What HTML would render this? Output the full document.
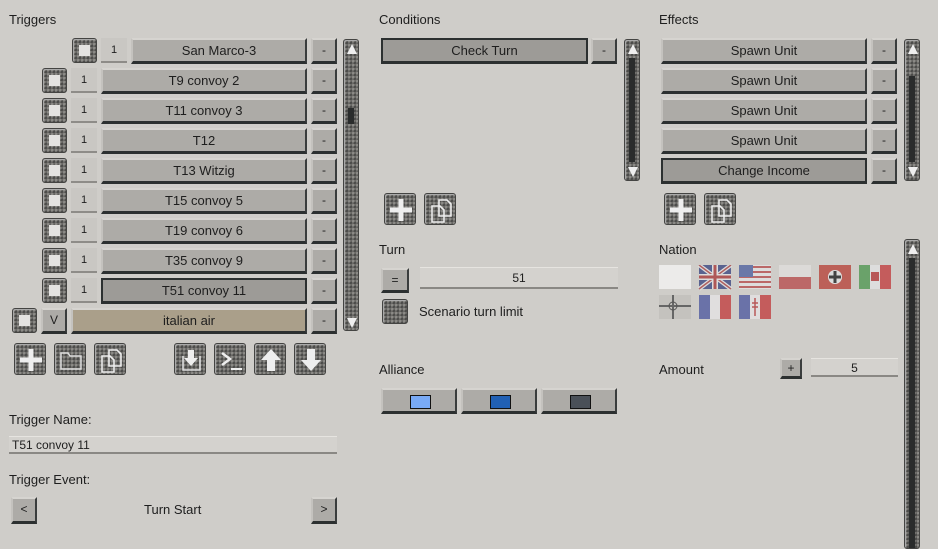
<!DOCTYPE html><html><head><meta charset="utf-8"><style>
body{margin:0;width:938px;height:538px;background:#cfcdc9;font-family:"Liberation Sans",sans-serif;color:#1e1e1e;position:relative;overflow:hidden}
div{position:absolute;box-sizing:border-box}
.l{font-size:13px}
.b{background:#adaba7;border-top:2px solid #d6d4d0;border-left:2px solid #c4c2be;border-right:2px solid #3a3d3d;border-bottom:3px solid #2c3030;font-size:13px;text-align:center;line-height:21px}
.s{background:#9d9b97;border:2px solid #2c3030;border-bottom:3px solid #2c3030}
.n{background:#c9c7c3;border-bottom:2px solid #8e8c88;font-size:11px;text-align:center;line-height:24px}
.m{font-size:12px}
.t{background-color:#6a6966;background-image:radial-gradient(circle at 30% 30%,#8c8b87 1px,transparent 1.6px),radial-gradient(circle at 70% 70%,#4a4a48 1px,transparent 1.6px);background-size:4px 4px;border-radius:3px;border:1px solid #444442;box-shadow:inset 1px 1px 0 #aaa;overflow:hidden}
.c::after{content:"";position:absolute;left:6px;top:6px;width:11px;height:11px;background:#e4e3e1}
.sb{width:16px}
.sb .tr{left:4px;width:6px;background:#2a2c2c}
.f{background:#d4d2ce;border-bottom:2px solid #8a8884;border-top:1px solid #e6e4e0}
svg{position:absolute;left:0;top:0}
</style></head><body>
<div class="l" style="left:9px;top:12px">Triggers</div>
<div class="l" style="left:379px;top:12px">Conditions</div>
<div class="l" style="left:659px;top:12px">Effects</div>

<div class="t c" style="left:72px;top:38px;width:25px;height:25px"></div>
<div class="n" style="left:101px;top:38px;width:26px;height:25px">1</div>
<div class="b" style="left:131px;top:38px;width:176px;height:26px">San Marco-3</div>
<div class="b m" style="left:311px;top:38px;width:26px;height:26px">-</div>

<div class="t c" style="left:42px;top:68px;width:25px;height:25px"></div><div class="n" style="left:71px;top:68px;width:26px;height:25px">1</div><div class="b" style="left:101px;top:68px;width:206px;height:26px">T9 convoy 2</div><div class="b m" style="left:311px;top:68px;width:26px;height:26px">-</div>
<div class="t c" style="left:42px;top:98px;width:25px;height:25px"></div><div class="n" style="left:71px;top:98px;width:26px;height:25px">1</div><div class="b" style="left:101px;top:98px;width:206px;height:26px">T11 convoy 3</div><div class="b m" style="left:311px;top:98px;width:26px;height:26px">-</div>
<div class="t c" style="left:42px;top:128px;width:25px;height:25px"></div><div class="n" style="left:71px;top:128px;width:26px;height:25px">1</div><div class="b" style="left:101px;top:128px;width:206px;height:26px">T12</div><div class="b m" style="left:311px;top:128px;width:26px;height:26px">-</div>
<div class="t c" style="left:42px;top:158px;width:25px;height:25px"></div><div class="n" style="left:71px;top:158px;width:26px;height:25px">1</div><div class="b" style="left:101px;top:158px;width:206px;height:26px">T13 Witzig</div><div class="b m" style="left:311px;top:158px;width:26px;height:26px">-</div>
<div class="t c" style="left:42px;top:188px;width:25px;height:25px"></div><div class="n" style="left:71px;top:188px;width:26px;height:25px">1</div><div class="b" style="left:101px;top:188px;width:206px;height:26px">T15 convoy 5</div><div class="b m" style="left:311px;top:188px;width:26px;height:26px">-</div>
<div class="t c" style="left:42px;top:218px;width:25px;height:25px"></div><div class="n" style="left:71px;top:218px;width:26px;height:25px">1</div><div class="b" style="left:101px;top:218px;width:206px;height:26px">T19 convoy 6</div><div class="b m" style="left:311px;top:218px;width:26px;height:26px">-</div>
<div class="t c" style="left:42px;top:248px;width:25px;height:25px"></div><div class="n" style="left:71px;top:248px;width:26px;height:25px">1</div><div class="b" style="left:101px;top:248px;width:206px;height:26px">T35 convoy 9</div><div class="b m" style="left:311px;top:248px;width:26px;height:26px">-</div>
<div class="t c" style="left:42px;top:278px;width:25px;height:25px"></div><div class="n" style="left:71px;top:278px;width:26px;height:25px">1</div><div class="b s" style="left:101px;top:278px;width:206px;height:26px">T51 convoy 11</div><div class="b m" style="left:311px;top:278px;width:26px;height:26px">-</div>
<div class="t c" style="left:12px;top:308px;width:25px;height:25px"></div>
<div class="b m" style="left:41px;top:308px;width:26px;height:26px">V</div>
<div class="b" style="left:71px;top:308px;width:236px;height:26px;background:#aa9f8a">italian air</div>
<div class="b m" style="left:311px;top:308px;width:26px;height:26px">-</div>

<div class="t sb" style="left:343px;top:39px;height:292px"><div class="tr" style="top:68px;height:16px"></div><svg width="16" height="290"><path d="M3 14L8 4L13 14Z M3 278L8 288L13 278Z" fill="#eee"/></svg></div>
<div class="t sb" style="left:624px;top:39px;height:142px"><div class="tr" style="top:18px;height:104px"></div><svg width="16" height="140"><path d="M3 14L8 4L13 14Z M3 127L8 137L13 127Z" fill="#eee"/></svg></div>
<div class="t sb" style="left:904px;top:39px;height:142px"><div class="tr" style="top:36px;height:86px"></div><svg width="16" height="140"><path d="M3 14L8 4L13 14Z M3 127L8 137L13 127Z" fill="#eee"/></svg></div>
<div class="t sb" style="left:904px;top:239px;height:310px"><div class="tr" style="top:18px;height:290px"></div><svg width="16" height="30"><path d="M3 14L8 4L13 14Z" fill="#eee"/></svg></div>

<div class="t" style="left:14px;top:343px;width:32px;height:32px"><svg width="32" height="32"><path d="M16 5V27M5 16H27" stroke="#eee" stroke-width="5"/></svg></div>
<div class="t" style="left:54px;top:343px;width:32px;height:32px"><svg width="32" height="32"><path d="M6 9H13L15 12H26V25H6Z" fill="none" stroke="#ddd" stroke-width="1.5"/></svg></div>
<div class="t" style="left:94px;top:343px;width:32px;height:32px"><svg width="32" height="32"><path d="M14 6H22L26 10V22H14Z M7 12H15L19 16V28H7Z" fill="none" stroke="#eee" stroke-width="1.6"/></svg></div>
<div class="t" style="left:174px;top:343px;width:32px;height:32px"><svg width="32" height="32"><path d="M8 12V26H25V12" fill="none" stroke="#ddd" stroke-width="1.6"/><path d="M13 6H19V14H23L16 22L9 14H13Z" fill="#eee"/></svg></div>
<div class="t" style="left:214px;top:343px;width:32px;height:32px"><svg width="32" height="32"><path d="M7 9L15 15L7 21" fill="none" stroke="#eee" stroke-width="2.5"/><path d="M16 25H27" stroke="#eee" stroke-width="2"/></svg></div>
<div class="t" style="left:254px;top:343px;width:32px;height:32px"><svg width="32" height="32"><path d="M16 5L26 16H20V27H12V16H6Z" fill="#eee"/></svg></div>
<div class="t" style="left:294px;top:343px;width:32px;height:32px"><svg width="32" height="32"><path d="M16 27L26 16H20V5H12V16H6Z" fill="#eee"/></svg></div>

<div class="l" style="left:9px;top:412px">Trigger Name:</div>
<div class="f" style="left:9px;top:436px;width:328px;height:18px;font-size:12px;line-height:17px;padding-left:3px">T51 convoy 11</div>
<div class="l" style="left:9px;top:472px">Trigger Event:</div>
<div class="b m" style="left:11px;top:497px;width:26px;height:27px">&lt;</div>
<div class="l" style="left:144px;top:502px">Turn Start</div>
<div class="b m" style="left:311px;top:497px;width:26px;height:27px">&gt;</div>

<div class="b s" style="left:381px;top:38px;width:207px;height:26px">Check Turn</div>
<div class="b m" style="left:591px;top:38px;width:26px;height:26px">-</div>
<div class="t" style="left:384px;top:193px;width:32px;height:32px"><svg width="32" height="32"><path d="M16 5V27M5 16H27" stroke="#eee" stroke-width="5"/></svg></div>
<div class="t" style="left:424px;top:193px;width:32px;height:32px"><svg width="32" height="32"><path d="M14 6H22L26 10V22H14Z M7 12H15L19 16V28H7Z" fill="none" stroke="#eee" stroke-width="1.6"/></svg></div>
<div class="l" style="left:379px;top:242px">Turn</div>
<div class="b m" style="left:381px;top:268px;width:28px;height:25px">=</div>
<div class="f" style="left:420px;top:267px;width:198px;height:22px;font-size:12px;text-align:center;line-height:20px">51</div>
<div class="t" style="left:382px;top:299px;width:26px;height:25px"></div>
<div class="l" style="left:419px;top:304px">Scenario turn limit</div>
<div class="l" style="left:379px;top:362px">Alliance</div>
<div class="b" style="left:381px;top:388px;width:76px;height:26px"><div style="left:27px;top:5px;width:21px;height:14px;background:#79aaf6;border:1px solid #111"></div></div>
<div class="b" style="left:461px;top:388px;width:76px;height:26px"><div style="left:27px;top:5px;width:21px;height:14px;background:#2160b4;border:1px solid #111"></div></div>
<div class="b" style="left:541px;top:388px;width:76px;height:26px"><div style="left:27px;top:5px;width:21px;height:14px;background:#4a5058;border:1px solid #111"></div></div>

<div class="b" style="left:661px;top:38px;width:206px;height:26px">Spawn Unit</div><div class="b m" style="left:871px;top:38px;width:26px;height:26px">-</div>
<div class="b" style="left:661px;top:68px;width:206px;height:26px">Spawn Unit</div><div class="b m" style="left:871px;top:68px;width:26px;height:26px">-</div>
<div class="b" style="left:661px;top:98px;width:206px;height:26px">Spawn Unit</div><div class="b m" style="left:871px;top:98px;width:26px;height:26px">-</div>
<div class="b" style="left:661px;top:128px;width:206px;height:26px">Spawn Unit</div><div class="b m" style="left:871px;top:128px;width:26px;height:26px">-</div>
<div class="b s" style="left:661px;top:158px;width:206px;height:26px">Change Income</div><div class="b m" style="left:871px;top:158px;width:26px;height:26px">-</div>
<div class="t" style="left:664px;top:193px;width:32px;height:32px"><svg width="32" height="32"><path d="M16 5V27M5 16H27" stroke="#eee" stroke-width="5"/></svg></div>
<div class="t" style="left:704px;top:193px;width:32px;height:32px"><svg width="32" height="32"><path d="M14 6H22L26 10V22H14Z M7 12H15L19 16V28H7Z" fill="none" stroke="#eee" stroke-width="1.6"/></svg></div>
<div class="l" style="left:659px;top:242px">Nation</div>
<svg style="left:659px;top:265px" width="240" height="60">
<rect x="0" y="0" width="32" height="24" fill="#ecebea"/>
<g transform="translate(40,0)"><rect width="32" height="24" fill="#5a6390"/><path d="M0 0L32 24M32 0L0 24" stroke="#ddd" stroke-width="4"/><path d="M0 0L32 24M32 0L0 24" stroke="#b06060" stroke-width="1.5"/><path d="M16 0V24M0 12H32" stroke="#ddd" stroke-width="6"/><path d="M16 0V24M0 12H32" stroke="#b05858" stroke-width="3"/></g>
<g transform="translate(80,0)"><rect width="32" height="24" fill="#ddd"/><path d="M0 2H32M0 7H32M0 12H32M0 17H32M0 22H32" stroke="#bb6868" stroke-width="2"/><rect width="14" height="12" fill="#6a78a8"/></g>
<g transform="translate(120,0)"><rect width="32" height="12" fill="#dcdad8"/><rect y="12" width="32" height="12" fill="#bc6868"/></g>
<g transform="translate(160,0)"><rect width="32" height="24" fill="#bc6058"/><circle cx="16" cy="12" r="7" fill="#ddd"/><path d="M16 6V18M10 12H22" stroke="#444" stroke-width="3"/></g>
<g transform="translate(200,0)"><rect width="11" height="24" fill="#6aa26a"/><rect x="11" width="11" height="24" fill="#ddd"/><rect x="21" width="11" height="24" fill="#c45c5c"/><rect x="12" y="7" width="8" height="9" fill="#b85858"/></g>
<g transform="translate(0,30)"><rect width="32" height="24" fill="#c4c2be"/><path d="M14 0V24M0 11H32" stroke="#666" stroke-width="2"/><circle cx="14" cy="11" r="4" fill="none" stroke="#555"/></g>
<g transform="translate(40,30)"><rect width="11" height="24" fill="#6a72a8"/><rect x="11" width="10" height="24" fill="#e0dede"/><rect x="21" width="11" height="24" fill="#c45c5c"/></g>
<g transform="translate(80,30)"><rect width="11" height="24" fill="#6a72a8"/><rect x="11" width="10" height="24" fill="#e0dede"/><rect x="21" width="11" height="24" fill="#c45c5c"/><path d="M16 3V21M13 8H19M13 12H19" stroke="#b85858" stroke-width="1.5"/></g>
</svg>
<div class="l" style="left:659px;top:362px">Amount</div>
<div class="b m" style="left:780px;top:358px;width:22px;height:21px;line-height:16px">+</div>
<div class="f" style="left:811px;top:358px;width:87px;height:19px;font-size:12px;text-align:center;line-height:18px">5</div>
</body></html>
